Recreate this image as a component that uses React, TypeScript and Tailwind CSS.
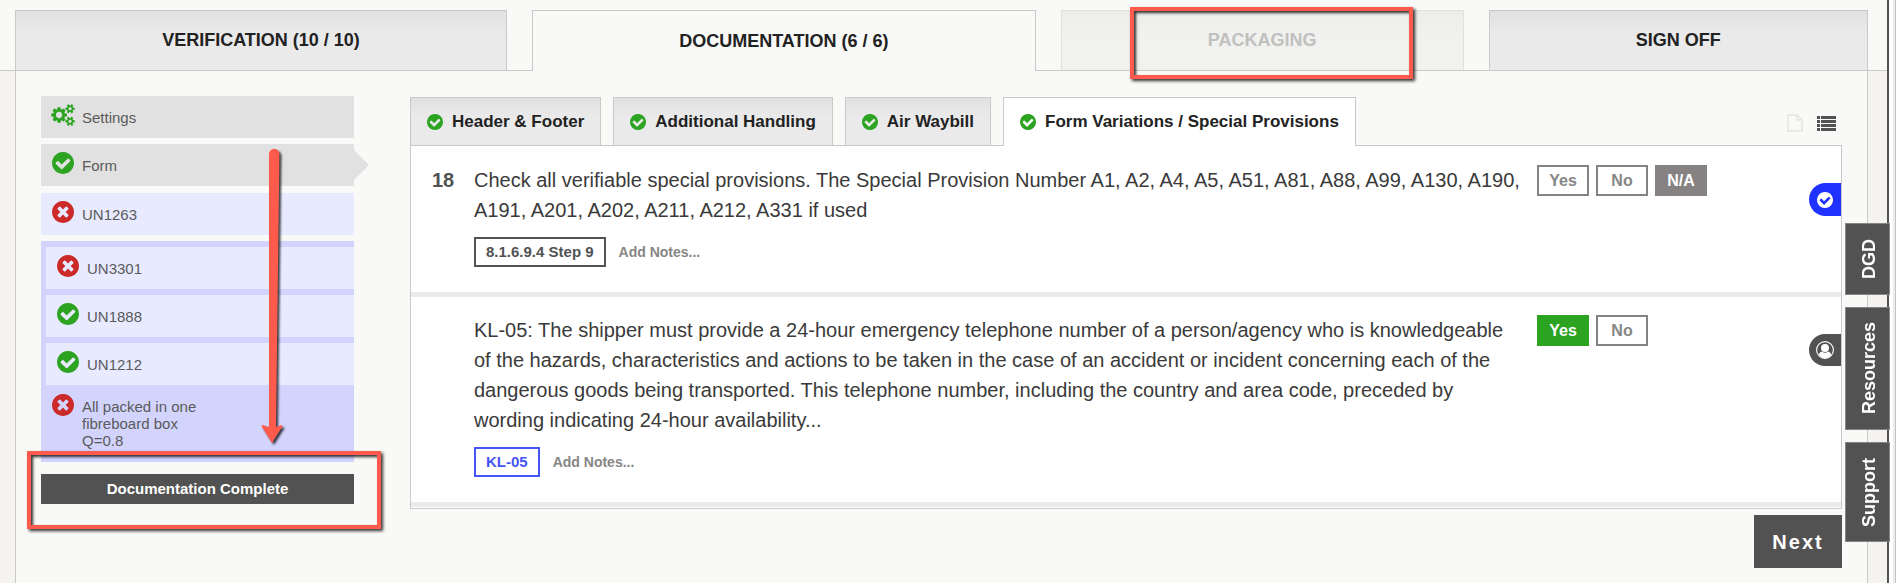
type Status = "ok" | "error" | "settings"

const stages = [
    { label: "VERIFICATION (10 / 10)", state: "idle" },
    { label: "DOCUMENTATION (6 / 6)", state: "active" },
    { label: "PACKAGING", state: "disabled" },
    { label: "SIGN OFF", state: "idle" },
]

const formTabs = ["Header & Footer", "Additional Handling", "Air Waybill", "Form Variations / Special Provisions"]

function CheckCircle({ className }: { className: string }) {
    return (
        <svg className={className} viewBox="128 128 1536 1536" fill="currentColor">
            <path d="M1412 734q0-28-18-46l-91-90q-19-19-45-19t-45 19l-408 407-226-226q-19-19-45-19t-45 19l-91 90q-18 18-18 46 0 27 18 45l362 362q19 19 45 19 27 0 46-19l543-543q18-18 18-45zm252 162q0 209-103 385.5t-279.5 279.5-385.5 103-385.5-103-279.5-279.5-103-385.5 103-385.5 279.5-279.5 385.5-103 385.5 103 279.5 279.5 103 385.5z" />
        </svg>
    )
}

function TimesCircle({ className }: { className: string }) {
    return (
        <svg className={className} viewBox="128 128 1536 1536" fill="currentColor">
            <path d="M1277 1122q0-26-19-45l-181-181 181-181q19-19 19-45 0-27-19-46l-90-90q-19-18-46-18-26 0-45 18l-181 181-181-181q-19-18-45-18-27 0-46 18l-90 90q-19 19-19 46 0 26 19 45l181 181-181 181q-19 19-19 45 0 27 19 46l90 90q19 18 46 18 26 0 45-18l181-181 181 181q19 18 45 18 27 0 46-18l90-90q19-19 19-46zm387-226q0 209-103 385.5t-279.5 279.5-385.5 103-385.5-103-279.5-279.5-103-385.5 103-385.5 279.5-279.5 385.5-103 385.5 103 279.5 279.5 103 385.5z" />
        </svg>
    )
}

function Cogs({ className }: { className: string }) {
    return (
        <svg className={className} viewBox="0 0 1920 1792" fill="currentColor">
            <path d="M896 896q0-106-75-181t-181-75-181 75-75 181 75 181 181 75 181-75 75-181zm768 512q0-52-38-90t-90-38-90 38-38 90q0 53 37.5 90.5t90.5 37.5 90.5-37.5 37.5-90.5zm0-1024q0-52-38-90t-90-38-90 38-38 90q0 53 37.5 90.5t90.5 37.5 90.5-37.5 37.5-90.5zm-384 421v185q0 10-7 19.5t-16 10.5l-155 24q-11 35-32 76 34 48 90 115 7 11 7 20 0 12-7 19-23 30-82.5 89.5t-78.5 59.5q-11 0-21-7l-115-90q-37 19-77 31-11 108-23 155-7 24-30 24h-186q-11 0-20-7.5t-10-17.5l-23-153q-34-10-75-31l-118 89q-7 7-20 7-11 0-21-8-144-133-144-160 0-9 7-19 10-14 41-53t47-61q-23-44-35-82l-152-24q-10-1-17-9.5t-7-19.5v-185q0-10 7-19.5t16-10.5l155-24q11-35 32-76-34-48-90-115-7-11-7-20 0-12 7-20 22-30 82-89t79-59q11 0 21 7l115 90q34-18 77-32 11-108 23-154 7-24 30-24h186q11 0 20 7.5t10 17.5l23 153q34 10 75 31l118-89q8-7 20-7 11 0 21 8 144 133 144 160 0 8-7 19-12 16-42 54t-45 60q23 48 34 82l152 23q10 2 17 10.5t7 19.5zm640 533v140q0 16-149 31-12 27-30 52 51 113 51 138 0 4-4 7-122 71-124 71-8 0-46-47t-52-68q-20 2-30 2t-30-2q-14 21-52 68t-46 47q-2 0-124-71-4-3-4-7 0-25 51-138-18-25-30-52-149-15-149-31v-140q0-16 149-31 13-29 30-52-51-113-51-138 0-4 4-7 4-2 35-20t59-34 30-16q8 0 46 46.5t52 67.5q20-2 30-2t30 2q51-71 92-112l6-2q4 0 124 70 4 3 4 7 0 25-51 138 17 23 30 52 149 15 149 31zm0-1024v140q0 16-149 31-12 27-30 52 51 113 51 138 0 4-4 7-122 71-124 71-8 0-46-47t-52-68q-20 2-30 2t-30-2q-14 21-52 68t-46 47q-2 0-124-71-4-3-4-7 0-25 51-138-18-25-30-52-149-15-149-31v-140q0-16 149-31 13-29 30-52-51-113-51-138 0-4 4-7 4-2 35-20t59-34 30-16q8 0 46 46.5t52 67.5q20-2 30-2t30 2q51-71 92-112l6-2q4 0 124 70 4 3 4 7 0 25-51 138 17 23 30 52 149 15 149 31z" />
        </svg>
    )
}

function StatusIcon({ status }: { status: Status }) {
    if (status === "settings") return <Cogs className="w-6 h-[22px] -ml-px -mt-1 text-[#2ca321]" />
    if (status === "ok") return <CheckCircle className="w-[22px] h-[22px] -mt-1 text-[#2ca321]" />
    return <TimesCircle className="w-[22px] h-[22px] -mt-1 text-[#cc2929]" />
}

function SideItem({ status, label, className }: { status: Status; label: string; className: string }) {
    return (
        <a href="#" className={`relative flex items-center h-[42px] pl-[11px] text-[15px] text-[#5a5a5a] ${className}`}>
            <span className="flex w-[30px]"><StatusIcon status={status} /></span>
            <span className="pt-[2px]">{label}</span>
            {label === "Form" && (
                <span className="absolute left-full top-[6px] border-y-[15px] border-l-[15px] border-y-transparent border-l-[#e1e1e1]" />
            )}
        </a>
    )
}

function Callout({ className }: { className: string }) {
    return (
        <div className={`absolute border-4 border-[#ff5b4d] pointer-events-none shadow-[2px_2px_3px_rgba(0,0,0,0.8),inset_2px_2px_3px_rgba(0,0,0,0.8)] ${className}`} />
    )
}

function Sidebar() {
    return (
        <nav className="relative w-[313px] shrink-0 flex flex-col">
            <SideItem status="settings" label="Settings" className="bg-[#e1e1e1] mb-[6px]" />
            <SideItem status="ok" label="Form" className="bg-[#e1e1e1] mb-[7px]" />
            <SideItem status="error" label="UN1263" className="bg-[#e8eaff] mb-[6px]" />
            <div className="bg-[#d2d4fe] pt-[6px] pb-[13px]">
                <div className="pl-[5px] flex flex-col gap-[6px]">
                    <SideItem status="error" label="UN3301" className="bg-[#e8eaff]" />
                    <SideItem status="ok" label="UN1888" className="bg-[#e8eaff]" />
                    <SideItem status="ok" label="UN1212" className="bg-[#e8eaff]" />
                </div>
                <a href="#" className="flex pl-[11px] pt-[13px] text-[15px] leading-[17px] text-[#5a5a5a]">
                    <span className="w-[30px]"><StatusIcon status="error" /></span>
                    <span className="w-[130px]">All packed in one fibreboard box Q=0.8</span>
                </a>
            </div>
            <button className="mt-3 h-[30px] bg-[#525252] text-white text-[15px] font-bold">Documentation Complete</button>

            {/* callout arrow */}
            <svg className="absolute left-[216px] top-[50px] w-8 h-[304px] drop-shadow-[2px_2px_1px_rgba(0,0,0,0.75)] pointer-events-none" viewBox="0 0 32 304" fill="#ff5b4d">
                <path d="M12 8a5.2 5.2 0 0 1 10.4 0L19 281q3-1 5-2q2 0 1 2L15 297 5 281q-1-2 1-2q2 1 6 2z" />
            </svg>
            <Callout className="-left-[14px] top-[355px] w-[354px] h-[78px]" />
        </nav>
    )
}

function Answer({ label, selected = "" }: { label: string; selected?: string }) {
    return (
        <button className={`h-[31px] w-[52px] border-2 text-[16px] leading-none font-bold ${selected || "border-[#868283] text-[#868686] bg-white"}`}>
            {label}
        </button>
    )
}

function Reference({ label, className }: { label: string; className: string }) {
    return (
        <div className="flex items-center gap-[13px]">
            <a href="#" className={`h-[30px] px-[10px] flex items-center border-2 text-[15px] font-bold ${className}`}>{label}</a>
            <button className="text-[14px] font-bold text-[#868686]">Add Notes...</button>
        </div>
    )
}

function Questions() {
    return (
        <div className="border border-[#c9c9c9] bg-white pb-px">
            <section className="relative flex h-[151px] pt-[19px] border-b-[5px] border-[#eaeaea]">
                <div className="w-[63px] shrink-0 pl-[21px] text-[20px] leading-[30px] font-bold text-[#525252]">18</div>
                <div className="w-[1063px] shrink-0">
                    <p className="text-[20px] leading-[30px] text-[#3a3a3a] mb-3">
                        Check all verifiable special provisions. The Special Provision Number A1, A2, A4, A5, A51, A81, A88, A99, A130, A190, A191, A201, A202, A211, A212, A331 if used
                    </p>
                    <Reference label="8.1.6.9.4 Step 9" className="border-[#525252] text-[#525252]" />
                </div>
                <div className="flex items-start gap-[7px]">
                    <Answer label="Yes" />
                    <Answer label="No" />
                    <Answer label="N/A" selected="border-[#868283] bg-[#868283] text-white" />
                </div>
                <span className="absolute right-0 top-[37px] w-8 h-[33px] rounded-l-full bg-[#1f32ff] flex items-center justify-center">
                    <CheckCircle className="w-4 h-4 text-white" />
                </span>
            </section>
            <section className="relative flex h-[210px] pt-[18px] border-b-[5px] border-[#eaeaea]">
                <div className="w-[63px] shrink-0" />
                <div className="w-[1063px] shrink-0">
                    <p className="text-[20px] leading-[30px] text-[#3a3a3a] mb-3 pr-3">
                        KL-05: The shipper must provide a 24-hour emergency telephone number of a person/agency who is knowledgeable of the hazards, characteristics and actions to be taken in the case of an accident or incident concerning each of the dangerous goods being transported. This telephone number, including the country and area code, preceded by wording indicating 24-hour availability...
                    </p>
                    <Reference label="KL-05" className="border-[#4656f5] text-[#4656f5]" />
                </div>
                <div className="flex items-start gap-[7px]">
                    <Answer label="Yes" selected="border-[#2ca321] bg-[#2ca321] text-white" />
                    <Answer label="No" />
                </div>
                <span className="absolute right-0 top-[37px] w-8 h-8 rounded-l-full bg-[#525252] flex items-center justify-center">
                    <svg className="w-[18px] h-[18px]" viewBox="0 0 18 18">
                        <circle cx="9" cy="9" r="8.4" fill="none" stroke="#fff" strokeWidth="1.1" />
                        <circle cx="9" cy="7" r="4" fill="#fff" />
                        <path d="M3 14c0-2 1-3 3-3.600c2 1.800 4 1.800 6 0c2 .6 3 1.600 3 3.600-3 4.400-9 4.400-12 0z" fill="#fff" />
                    </svg>
                </span>
            </section>
        </div>
    )
}

function SideTabs() {
    return (
        <div className="absolute right-[6px] top-[223px] flex flex-col gap-3 text-white text-[18px] font-bold">
            <button className="w-[45px] h-[72px] pl-1 bg-[#525252] border border-[#868686] flex items-center justify-center">
                <span className="[writing-mode:vertical-rl] rotate-180">DGD</span>
            </button>
            <button className="w-[45px] h-[123px] pl-1 bg-[#525252] border border-[#868686] flex items-center justify-center">
                <span className="[writing-mode:vertical-rl] rotate-180">Resources</span>
            </button>
            <button className="w-[45px] h-[100px] pl-1 bg-[#525252] border border-[#868686] flex items-center justify-center">
                <span className="[writing-mode:vertical-rl] rotate-180">Support</span>
            </button>
        </div>
    )
}

export default function App() {
    return (
        <div className="relative min-h-screen flex bg-[#f9f9f7] font-['Liberation_Sans',Arial,sans-serif]">
            <div className="flex-1 flex flex-col">
                <div className="relative flex items-end gap-[25px] pl-[15px] pr-[19px] pt-[10px] border-b border-[#c9c9c9]">
                    {stages.map((stage) => (
                        <button
                            key={stage.label}
                            disabled={stage.state === "disabled"}
                            className={`flex-auto border border-b-0 text-[18px] font-bold ${
                                stage.state === "active"
                                    ? "h-[61px] -mb-px bg-[#f9f9f7] border-[#c9c9c9] text-[#222]"
                                    : stage.state === "disabled"
                                      ? "h-[60px] bg-linear-to-b from-[#ececea] to-[#f1f1ef] to-40% border-[#e0e0de] text-[#c0c0be]"
                                      : "h-[60px] bg-linear-to-b from-[#e1e1e1] to-[#eaeaea] to-40% border-[#c9c9c9] text-[#222]"
                            }`}
                        >
                            {stage.label}
                        </button>
                    ))}
                    <Callout className="left-[1130px] top-[7px] w-[283px] h-[72px]" />
                </div>

                <div className="flex-1 flex bg-[#f4f3ef] pl-[15px] pr-[19px]">
                    <main className="flex-1 flex items-start gap-14 px-[25px] pt-[25px] bg-[#f9f9f7] border-x border-[#c9c9c9]">
                        <Sidebar />
                        <div className="flex-1 flex flex-col pt-px">
                            <div className="flex items-end gap-3">
                                {formTabs.map((tab, i) => (
                                    <button
                                        key={tab}
                                        className={`flex items-center gap-[9px] px-4 border border-b-0 border-[#c9c9c9] text-[17px] font-bold text-[#222] ${
                                            i === 3 ? "relative h-[49px] -mb-px bg-white" : "h-12 bg-linear-to-b from-[#e1e1e1] to-[#eaeaea] to-40%"
                                        }`}
                                    >
                                        <CheckCircle className="w-4 h-4 text-[#2ca321]" />
                                        {tab}
                                    </button>
                                ))}
                                <div className="ml-auto flex items-center gap-[14px] pr-[6px] pb-[13px]">
                                    <svg className="w-4 h-[18px]" viewBox="0 0 16 18" fill="none" stroke="#e3e3e1" strokeWidth="1.3">
                                        <path d="M1 1h9l5 5v11H1zM10 1v5h5" />
                                    </svg>
                                    <svg className="w-[19px] h-[15px]" viewBox="0 0 19 15" fill="#525252">
                                        <path d="M0 0h3v3H0zM4 0h15v3H4zM0 4h3v3H0zM4 4h15v3H4zM0 8h3v3H0zM4 8h15v3H4zM0 12h3v3H0zM4 12h15v3H4z" />
                                    </svg>
                                </div>
                            </div>
                            <Questions />
                            <button className="self-end mt-[6px] w-[88px] h-[53px] bg-[#525252] text-white text-[20px] font-bold tracking-[2px]">Next</button>
                        </div>
                    </main>
                </div>
            </div>
            {/* window edge */}
            <div className="flex w-[9px] border-l-2 border-r border-l-[#525252] border-r-[#c4c4c4] bg-white">
                <div className="ml-auto w-[2px] bg-[#ececec]" />
            </div>
            <SideTabs />
        </div>
    )
}
